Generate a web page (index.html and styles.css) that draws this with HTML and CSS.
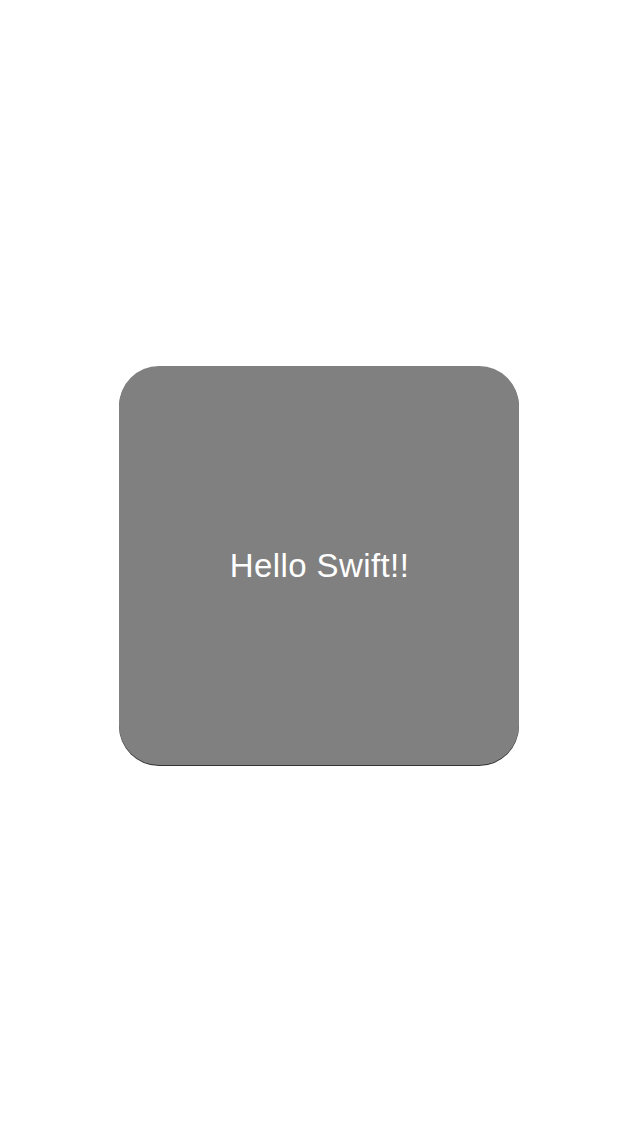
FILE: index.html
```html
<!DOCTYPE html>
<html>
<head>
<meta charset="utf-8">
<link rel="stylesheet" href="styles.css">
</head>
<body>
<main class="screen">
  <div class="card">
    <span class="card-label">Hello Swift!!</span>
  </div>
</main>
</body>
</html>
```

FILE: styles.css
```css
html, body {
  margin: 0;
  padding: 0;
  background: #ffffff;
}
.screen {
  width: 640px;
  height: 1136px;
  box-sizing: border-box;
  padding: 366px 0 0 119px;
}
.card {
  width: 400px;
  height: 399px;
  border-radius: 40px;
  background: #808080;
  box-shadow: 0 1px 0.5px rgba(0, 0, 0, 0.8);
  display: flex;
  align-items: center;
  justify-content: center;
}
.card-label {
  font-family: "Liberation Sans", Arial, sans-serif;
  font-size: 33px;
  letter-spacing: 0.4px;
  color: #ffffff;
  line-height: 1;
  padding: 0 0 1px 1px;
}
```
